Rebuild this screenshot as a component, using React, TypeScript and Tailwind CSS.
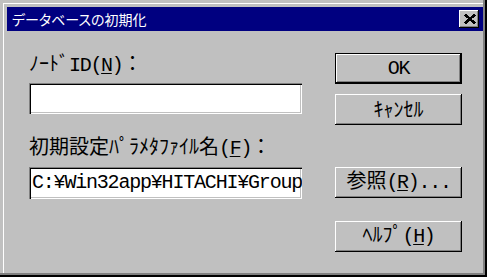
import React from "react";

const cjk = "font-['Noto_Sans_CJK_JP',sans-serif]";

function Lat({ children }: { children: React.ReactNode }) {
  return <span className="font-['Liberation_Mono',monospace] tracking-[-1.3px]">{children}</span>;
}

function U({ children }: { children: React.ReactNode }) {
  return <span className="underline underline-offset-2 decoration-1">{children}</span>;
}

function Btn({ children, isDefault, className = "" }: { children: React.ReactNode; isDefault?: boolean; className?: string }) {
  const bevel = isDefault
    ? "border border-black shadow-[inset_-1px_-1px_0_#000,inset_1px_1px_0_#fff,inset_-2px_-2px_0_#808080]"
    : "shadow-[inset_-1px_-1px_0_#000,inset_1px_1px_0_#fff,inset_-2px_-2px_0_#808080]";
  return (
    <div className={`h-[31px] w-[127px] flex items-center justify-center bg-[#c0c0c0] text-black text-[20px] leading-[20px] ${cjk} ${bevel} ${className}`}>
      <span className="pb-[2px]">{children}</span>
    </div>
  );
}

function Field({ children, className = "" }: { children?: React.ReactNode; className?: string }) {
  return (
    <div className={`w-[273px] bg-white flex items-center pl-[3px] overflow-hidden whitespace-nowrap shadow-[inset_1px_1px_0_#808080,inset_2px_2px_0_#000,inset_-1px_-1px_0_#fff,inset_-2px_-2px_0_#c0c0c0] ${className}`}>
      {children}
    </div>
  );
}

export default function App() {
  return (
    <div className="w-[489px] h-[280px] bg-white">
      <div className="w-[487px] h-[277px] bg-[#c0c0c0] pt-[7px] pl-[7px] flex flex-col shadow-[inset_-2px_-2px_0_#000,inset_-4px_-4px_0_#808080,inset_3px_3px_0_#c0c0c0,inset_4px_4px_0_#fff]">
        {/* Title bar */}
        <div className="w-[476px] h-[24px] bg-[#000080] flex items-center justify-between pl-[5px] pr-[4px]">
          <span className={`text-white text-[14px] leading-[14px] ${cjk} [font-feature-settings:'palt']`}>データベースの初期化</span>
          <div className="w-[20px] h-[18px] bg-[#c0c0c0] flex items-center justify-center shadow-[inset_-1px_-1px_0_#000,inset_1px_1px_0_#fff,inset_-2px_-2px_0_#808080]">
            <svg width="12" height="10" viewBox="0 0 12 10" className="ml-[1px] mb-[1px]" shapeRendering="crispEdges">
              <path d="M1 0.5 L11 9.5 M11 0.5 L1 9.5" stroke="#000" strokeWidth="2.6" fill="none" />
            </svg>
          </div>
        </div>

        {/* Body */}
        <div className="flex pl-[22px] pt-[22px]">
          <div className="flex flex-col w-[273px]">
            <div className={`h-[20px] leading-[20px] text-[20px] text-black whitespace-nowrap ${cjk}`}>
              ﾉｰﾄﾞ<Lat>ID(<U>N</U>)</Lat>：
            </div>
            <Field className="mt-[10px] h-[31px]" />
            <div className={`mt-[22px] h-[20px] leading-[20px] text-[20px] text-black whitespace-nowrap ${cjk}`}>
              初期設定ﾊﾟﾗﾒﾀﾌｧｲﾙ名<Lat>(<U>F</U>)</Lat>：
            </div>
            <Field className="mt-[11px] h-[32px]">
              <span className="font-['Liberation_Mono',monospace] text-[20px] leading-[20px] tracking-[-1.2px] text-black">
                C:¥Win32app¥HITACHI¥Group
              </span>
            </Field>
          </div>

          <div className="flex flex-col ml-[33px] w-[127px]">
            <Btn isDefault>
              <Lat>OK</Lat>
            </Btn>
            <Btn className="mt-[10px]">ｷｬﾝｾﾙ</Btn>
            <Btn className="mt-[42px]">
              参照<Lat>(<U>R</U>)...</Lat>
            </Btn>
            <Btn className="mt-[23px]">
              ﾍﾙﾌﾟ<Lat>(<U>H</U>)</Lat>
            </Btn>
          </div>
        </div>
      </div>
    </div>
  );
}
